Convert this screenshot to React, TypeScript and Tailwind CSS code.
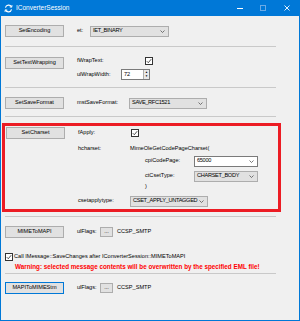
import React from 'react';

const font = { fontFamily: '"Liberation Sans", Arial, sans-serif' };

function Btn({ label, active }: { label: string; active?: boolean }) {
  return (
    <div
      className={`flex h-[12px] w-[59px] shrink-0 items-center justify-center border bg-[#e1e1e1] text-[5.6px] leading-none text-black ${
        active ? 'border-[#0078d7]' : 'border-[#adadad]'
      }`}
    >
      {label}
    </div>
  );
}

function Chevron() {
  return (
    <svg width="5" height="3" viewBox="0 0 5 3" className="shrink-0">
      <path d="M0.5 0.5 L2.5 2.5 L4.5 0.5" fill="none" stroke="#555" strokeWidth="0.8" />
    </svg>
  );
}

function Combo({ value, width, white }: { value: string; width: string; white?: boolean }) {
  return (
    <div
      className={`flex h-[11px] items-center justify-between border pl-[2px] pr-[3px] text-[5.6px] leading-none text-black ${width} ${
        white ? 'border-[#7a7a7a] bg-white' : 'border-[#adadad] bg-[#e1e1e1]'
      }`}
    >
      <span className="whitespace-nowrap tracking-[-0.3px]">{value}</span>
      <Chevron />
    </div>
  );
}

function Check() {
  return (
    <div className="flex h-[8px] w-[8px] shrink-0 items-center justify-center border border-[#333] bg-white">
      <svg width="6" height="6" viewBox="0 0 6 6">
        <path d="M0.8 3.2 L2.3 4.7 L5.2 1.2" fill="none" stroke="#222" strokeWidth="0.8" />
      </svg>
    </div>
  );
}

function Sep() {
  return <div className="h-px w-[271px] bg-[#c9c9c9]" />;
}

function Dots() {
  return (
    <div className="flex h-[10px] w-[13px] items-center justify-center border border-[#adadad] bg-[#e1e1e1] text-[5.6px] leading-none">
      ...
    </div>
  );
}

export default function App() {
  return (
    <div className="flex h-[321px] w-[300px] flex-col overflow-hidden border-x border-b border-[#0078d7] bg-[#f0f0f0]" style={font}>
      {/* title bar */}
      <div className="-mx-px flex h-[16px] shrink-0 items-center bg-[#0078d7] text-white">
        <svg width="9" height="9" viewBox="0 0 10 10" className="ml-[4px]">
          <path d="M8.3 3.2 A3.6 3.6 0 0 0 1.6 4" fill="none" stroke="white" strokeWidth="1.3" />
          <path d="M8.9 1.2 L8.6 3.6 L6.3 3.2" fill="none" stroke="white" strokeWidth="1" />
          <path d="M1.7 6.8 A3.6 3.6 0 0 0 8.4 6" fill="none" stroke="white" strokeWidth="1.3" />
          <path d="M1.1 8.8 L1.4 6.4 L3.7 6.8" fill="none" stroke="white" strokeWidth="1" />
        </svg>
        <span className="ml-[3px] text-[6.5px] leading-none">IConverterSession</span>
        <div className="ml-auto flex items-center">
          <div className="mr-[17px] h-px w-[6px] bg-white" />
          <div className="mr-[18px] h-[6px] w-[6px] border border-[#6aaae6]" />
          <svg width="6" height="6" viewBox="0 0 6 6" className="mr-[10px]">
            <path d="M0.5 0.5 L5.5 5.5 M5.5 0.5 L0.5 5.5" stroke="white" strokeWidth="0.9" />
          </svg>
        </div>
      </div>

      <div className="flex flex-col pl-[4px] text-[5.6px] leading-none text-black">
        {/* SetEncoding */}
        <div className="mt-[9px] flex h-[12px] items-center">
          <Btn label="SetEncoding" />
          <span className="ml-[13px] w-[13px]">et:</span>
          <Combo value="IET_BINARY" width="w-[79px]" />
        </div>
        <div className="mt-[9px]">
          <Sep />
        </div>

        {/* SetTextWrapping */}
        <div className="mt-[9px] flex">
          <div className="mt-px">
            <Btn label="SetTextWrapping" />
          </div>
          <div className="ml-[13px] flex flex-col">
            <div className="flex h-[10px] items-center">
              <span className="w-[68px]">fWrapText:</span>
              <Check />
            </div>
            <div className="mt-[3px] flex h-[11px] items-center">
              <span className="w-[44px]">ulWrapWidth:</span>
              <div className="flex h-[11px] w-[29px] border border-[#7a7a7a] bg-white">
                <span className="flex flex-1 items-center pl-[2px]">72</span>
                <div className="flex w-[6px] flex-col border-l border-[#adadad] bg-[#e9e9e9]">
                  <span className="flex flex-1 items-center justify-center text-[3px]">▲</span>
                  <span className="flex flex-1 items-center justify-center text-[3px]">▼</span>
                </div>
              </div>
            </div>
          </div>
        </div>
        <div className="mt-[7px]">
          <Sep />
        </div>

        {/* SetSaveFormat */}
        <div className="mt-[9px] flex h-[12px] items-center">
          <Btn label="SetSaveFormat" />
          <span className="ml-[13px] w-[52px]">mstSaveFormat:</span>
          <Combo value="SAVE_RFC1521" width="w-[78px]" />
        </div>
        <div className="mt-[7px]">
          <Sep />
        </div>

        {/* SetCharset (highlighted) */}
        <div className="-ml-[3px] mt-[6px] flex h-[89px] w-[279px] border-[3px] border-[#ec1c24] pl-px">
          <div className="mt-px">
            <Btn label="SetCharset" />
          </div>
          <div className="ml-[13px] flex flex-col">
            <div className="flex h-[13px] items-center">
              <span className="w-[53px]">fApply:</span>
              <Check />
            </div>
            <div className="mt-[4px] flex h-[12px] items-center">
              <span className="w-[52px]">hcharset:</span>
              <span>MimeOleGetCodePageCharset(</span>
            </div>
            <div className="flex h-[12px] items-center pl-[67px]">
              <span className="w-[49px]">cpiCodePage:</span>
              <Combo value="65000" width="w-[64px]" white />
            </div>
            <div className="mt-[3px] flex h-[12px] items-center pl-[67px]">
              <span className="w-[49px]">ctCsetType:</span>
              <Combo value="CHARSET_BODY" width="w-[64px]" />
            </div>
            <div className="flex h-[10px] items-center pl-[67px]">
              <span>)</span>
            </div>
            <div className="mt-[3px] flex h-[12px] items-center">
              <span className="w-[52px]">csetapplytype:</span>
              <Combo value="CSET_APPLY_UNTAGGED" width="w-[78px]" />
            </div>
          </div>
        </div>
        <div className="mt-[4px]">
          <Sep />
        </div>

        {/* MIMEToMAPI */}
        <div className="mt-[9px] flex h-[12px] items-center">
          <Btn label="MIMEToMAPI" />
          <span className="ml-[13px] w-[23px]">ulFlags:</span>
          <Dots />
          <span className="ml-[4px]">CCSP_SMTP</span>
        </div>

        <div className="mt-[14px] flex h-[10px] items-center">
          <Check />
          <span className="ml-px">Call IMessage::SaveChanges after IConverterSession::MIMEToMAPI</span>
        </div>
        <div className="flex h-[10px] items-center pl-[10px] text-[6.3px] font-bold text-[#ff0000]">
          Warning: selected message contents will be overwritten by the specified EML file!
        </div>
        <div className="mt-px">
          <Sep />
        </div>

        {/* MAPIToMIMEStm */}
        <div className="mt-[8px] flex h-[12px] items-center">
          <Btn label="MAPIToMIMEStm" active />
          <span className="ml-[13px] w-[23px]">ulFlags:</span>
          <Dots />
          <span className="ml-[4px]">CCSP_SMTP</span>
        </div>
      </div>
    </div>
  );
}
